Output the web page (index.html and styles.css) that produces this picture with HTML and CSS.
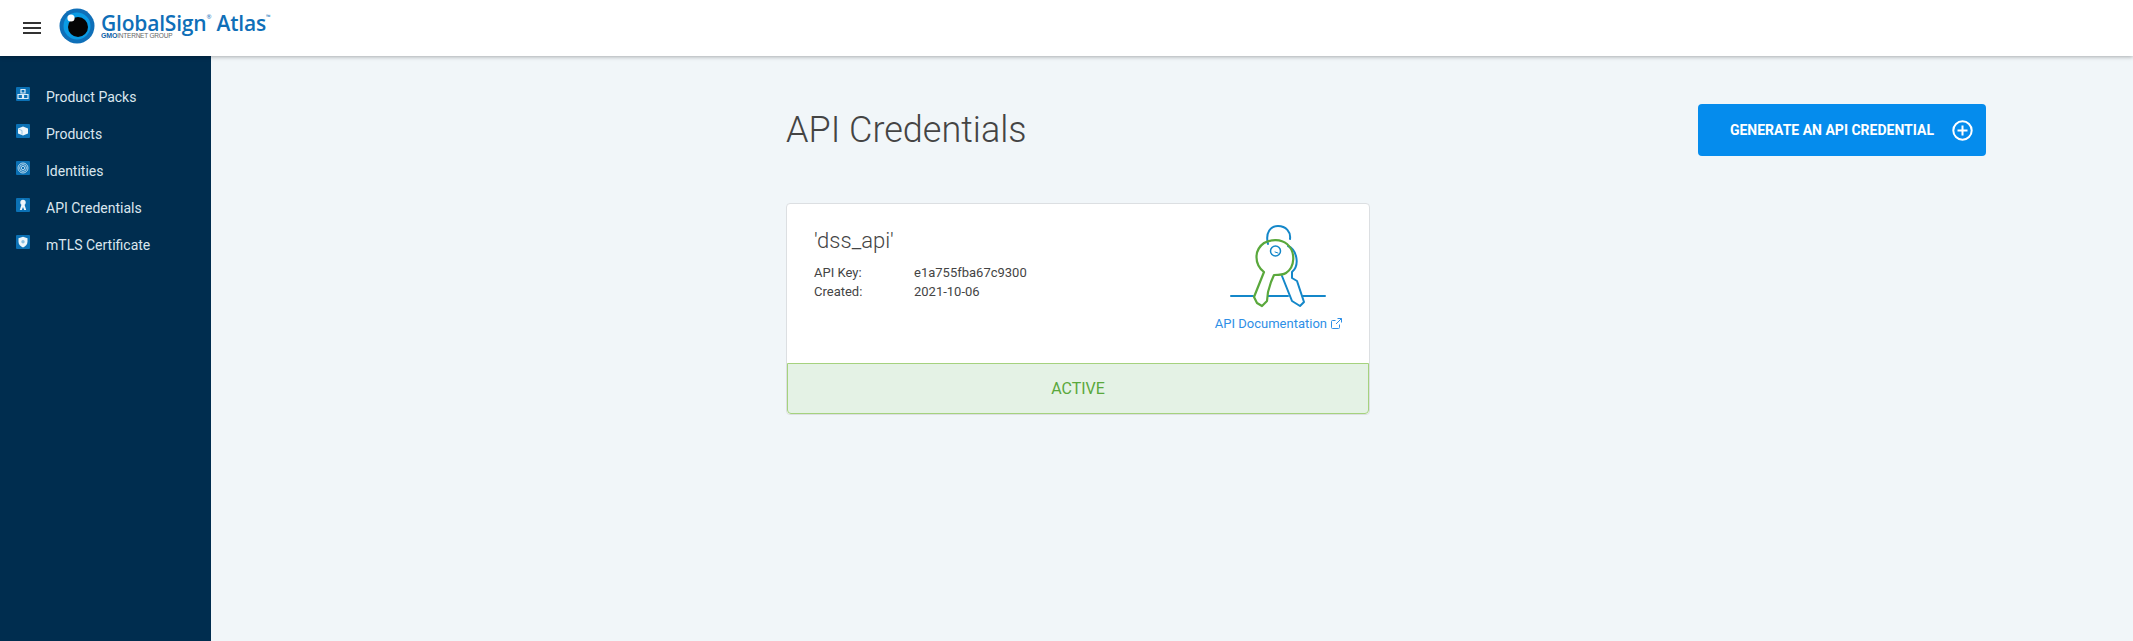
FILE: index.html
```html
<!DOCTYPE html>
<html>
  <head>
    <meta charset="utf-8">
    <title>API Credentials</title>
    <link rel="stylesheet" href="styles.css">
  </head>
  <body>
    <header class="topbar">
      <div class="burger"><span></span><span></span><span></span></div>
      <div class="logo">
        <svg class="logoEye" width="36" height="36" viewBox="0 0 36 36">
          <circle cx="18" cy="18" r="17.5" fill="#0f6fb8"/>
          <circle cx="18" cy="18" r="13.5" fill="#0a9be4"/>
          <circle cx="19" cy="19" r="10" fill="#050505"/>
          <circle cx="12" cy="10" r="3.6" fill="#fff"/>
        </svg>
        <div class="logoText">
          <div class="logoName">GlobalSign<sup>®</sup> Atlas<sup>™</sup></div>
          <div class="logoSub"><b>GMO</b>INTERNET GROUP</div>
        </div>
      </div>
    </header>
    <div class="layout">
      <nav class="sidebar">
        <a class="navItem">
          <svg class="navIcon" viewBox="0 0 14 14"><rect width="14" height="14" rx="1" fill="#0b71b5"/><path d="M5 2.5h4v3.5H5zM2 7.5h4.500v4H2zM7.500 7.500H12v4H7.500z" fill="none" stroke="#dcecf7" stroke-width="1.200"/></svg>
          <span>Product Packs</span>
        </a>
        <a class="navItem">
          <svg class="navIcon" viewBox="0 0 14 14"><rect width="14" height="14" rx="1" fill="#0b71b5"/><path d="M2 4.500 7 2.500l5 2v5l-5 2-5-2z" fill="#eef6fb"/><path d="M2.500 5 6 6.500v4" fill="none" stroke="#7fb8dc" stroke-width=".8"/></svg>
          <span>Products</span>
        </a>
        <a class="navItem">
          <svg class="navIcon" viewBox="0 0 14 14"><rect width="14" height="14" rx="1" fill="#0b71b5"/><g fill="none" stroke="#dcecf7" stroke-width=".8"><circle cx="7" cy="7" r="5"/><circle cx="7" cy="7" r="3.400"/><circle cx="7" cy="7" r="1.700"/></g></svg>
          <span>Identities</span>
        </a>
        <a class="navItem">
          <svg class="navIcon" viewBox="0 0 14 14"><rect width="14" height="14" rx="1" fill="#0b71b5"/><circle cx="7" cy="4.500" r="2.700" fill="#eef6fb"/><path d="M5.500 6.500 3.800 12h2L7 9l1.200 3h2L8.500 6.500z" fill="#eef6fb"/></svg>
          <span>API Credentials</span>
        </a>
        <a class="navItem">
          <svg class="navIcon" viewBox="0 0 14 14"><rect width="14" height="14" rx="1" fill="#0b71b5"/><path d="M7 1.800 11.500 3.300v3.500C11.500 9.500 9.500 11.400 7 12.400 4.500 11.400 2.500 9.500 2.500 6.800V3.300z" fill="#eef6fb"/><circle cx="7" cy="6.800" r="1.700" fill="#8cc0e0"/></svg>
          <span>mTLS Certificate</span>
        </a>
      </nav>
      <main class="content">
        <h1 class="pageTitle">API Credentials</h1>
        <button class="generateBtn">
          <span>GENERATE AN API CREDENTIAL</span>
          <svg width="21" height="21" viewBox="0 0 21 21" fill="none" stroke="#fff" stroke-width="2"><circle cx="10.500" cy="10.500" r="9.200"/><path d="M10.500 5.500v10M5.500 10.500h10"/></svg>
        </button>
        <section class="card">
          <div class="cardBody">
            <div class="cardInfo">
              <h2 class="credName">'dss_api'</h2>
              <dl class="credMeta">
                <dt>API Key:</dt><dd>e1a755fba67c9300</dd>
                <dt>Created:</dt><dd>2021-10-06</dd>
              </dl>
            </div>
            <div class="cardSide">
              <svg class="keys" width="100" height="90" viewBox="48 18 100 90" fill="none" stroke-linecap="round" stroke-linejoin="round">
                <g stroke="#1487c9" stroke-width="2">
                  <path d="M51 92h22M88 92h20M123 92h22"/>
                  <path d="M88 40C85 28 91 22 98 22c8 0 13 6 12 13"/>
                  <path d="M108 42c9 4 12 19 4 26v6l5 3 7 21-4 4-8-5-10-25"/>
                </g>
                <circle cx="95.500" cy="47" r="5" stroke="#1487c9" stroke-width="1.500"/>
                <path d="M95 48l3 1" stroke="#1487c9" stroke-width="1"/>
                <path d="M84 68 C74 60 74 46 84 39c7-4 17-4 23 1 9 8 8 23-1 29-3 2-8 2-12 2l-3 7-3 10-1 9-5 5-5-3-3-6z" stroke="#5aa83c" stroke-width="2.200"/>
              </svg>
              <a class="docLink">
                API Documentation
                <svg width="11" height="11" viewBox="0 0 11 11" fill="none" stroke="#2e8fe6" stroke-width="1"><path d="M8.500 6.500v3a1 1 0 0 1-1 1h-6a1 1 0 0 1-1-1v-6a1 1 0 0 1 1-1h3M6.500.500h4v4M10.500.500 5 6"/></svg>
              </a>
            </div>
          </div>
          <div class="statusBar">ACTIVE</div>
        </section>
      </main>
    </div>
  </body>
</html>
```

FILE: styles.css
```css
* {
  padding: 0;
  margin: 0;
  box-sizing: border-box;
}
html, body {
  height: 100%;
  overflow: hidden;
}
body {
  display: flex;
  flex-direction: column;
  background-color: #f1f6f9;
  font-family: Roboto, "Liberation Sans", sans-serif;
  color: #444;
}
.topbar {
  position: relative;
  z-index: 2;
  flex: none;
  display: flex;
  align-items: center;
  height: 56px;
  padding-left: 23px;
  background-color: white;
  box-shadow: 0 1px 4px rgba(0, 0, 0, 0.3);
}
.burger {
  display: flex;
  flex-direction: column;
  gap: 3px;
  width: 18px;
}
.burger span {
  height: 2px;
  background-color: #333;
}
.logo {
  display: flex;
  align-items: center;
  margin: -4px 0 0 18px;
}
.logoText {
  margin-left: 6px;
  color: #0f6fb8;
}
.logoName {
  font-family: "Open Sans", sans-serif;
  font-size: 21px;
  font-weight: 600;
  line-height: 22px;
  letter-spacing: -0.2px;
  white-space: nowrap;
}
.logoName sup {
  font-size: 6px;
  font-weight: 400;
  line-height: 0;
  vertical-align: 12px;
}
.logoSub {
  margin-top: -2px;
  font-family: "Liberation Sans", sans-serif;
  font-size: 6.5px;
  line-height: 8px;
  color: #666;
  letter-spacing: -0.2px;
}
.logoSub b {
  color: #0f5fa8;
  font-size: 7px;
}
.layout {
  flex: 1;
  display: flex;
  min-height: 0;
}
.sidebar {
  flex: none;
  width: 211px;
  padding-top: 22px;
  background-color: #002d4f;
}
.navItem {
  display: flex;
  align-items: center;
  gap: 16px;
  height: 37px;
  padding-left: 16px;
  font-size: 14px;
  color: #dbe6ee;
}
.navIcon {
  flex: none;
  width: 14px;
  height: 14px;
  margin-top: -5px;
}
.content {
  flex: 1;
  display: grid;
  grid-template-columns: 584px 1fr;
  grid-template-rows: 52px auto;
  row-gap: 47px;
  align-content: start;
  padding: 48px 147px 0 575px;
}
.pageTitle {
  align-self: center;
  font-size: 36px;
  font-weight: 300;
  color: #444;
}
.generateBtn {
  justify-self: end;
  display: flex;
  align-items: center;
  justify-content: flex-end;
  gap: 18px;
  width: 288px;
  height: 52px;
  padding-right: 13px;
  border: none;
  border-radius: 4px;
  background-color: #058ced;
  color: white;
  font-family: Roboto, sans-serif;
  font-size: 14px;
  font-weight: 700;
}
.card {
  grid-column: 1;
  height: 212px;
  display: flex;
  flex-direction: column;
  background-color: white;
  border: 1px solid #dcdfe2;
  border-radius: 4px;
}
.cardBody {
  flex: 1;
  display: flex;
  justify-content: space-between;
  padding: 24px 27px 0 27px;
}
.credName {
  font-size: 22px;
  font-weight: 300;
  line-height: 26px;
  color: #444;
}
.credMeta {
  display: grid;
  grid-template-columns: 100px auto;
  margin-top: 9px;
  font-size: 13px;
  line-height: 19px;
}
.credMeta dd {
  color: #444;
}
.cardSide {
  display: flex;
  flex-direction: column;
  align-items: center;
  margin-top: -6px;
}
.keys {
  flex: none;
}
.docLink {
  display: flex;
  align-items: center;
  gap: 4px;
  margin-top: 4px;
  font-size: 13px;
  color: #2e8fe6;
  white-space: nowrap;
}
.statusBar {
  flex: none;
  height: 51px;
  line-height: 49px;
  text-align: center;
  font-size: 16px;
  color: #5aa83c;
  background-color: #e4f2e5;
  border: 1px solid #a5d27e;
  border-radius: 0 0 4px 4px;
}
```
